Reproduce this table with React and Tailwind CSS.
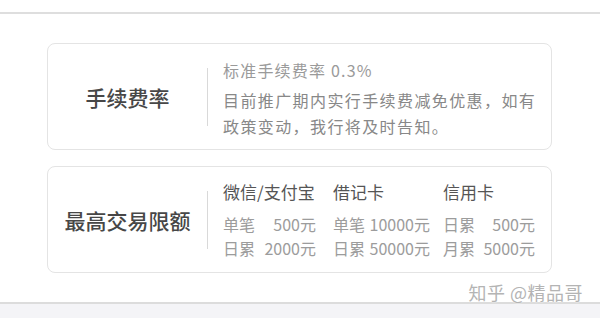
import React from 'react';

const limits = [
  { name: '微信/支付宝', col: 'w-[110px]', inner: 'w-[93px]', rows: [['单笔', '500元'], ['日累', '2000元']] },
  { name: '借记卡', col: 'w-[110px]', inner: 'w-[97px]', rows: [['单笔', '10000元'], ['日累', '50000元']] },
  { name: '信用卡', col: 'w-[92px]', inner: 'w-[92px]', rows: [['日累', '500元'], ['月累', '5000元']] },
];

const Card = ({ title, titleClass, children }) => (
  <div className="h-[107px] shrink-0 flex items-center border border-[#e4e4e4] rounded-[8px] bg-white">
    <div className={`w-[159px] shrink-0 flex justify-center text-[21px] font-medium text-[#474747] ${titleClass}`}>
      {title}
    </div>
    <div className="w-px h-[58px] bg-[#d9d9d9] shrink-0" />
    <div className="flex-1 self-stretch pl-[15px]">{children}</div>
  </div>
);

const App = () => {
  return (
    <div className="relative w-[600px] h-[318px] bg-white flex flex-col font-['Noto_Sans_CJK_SC','Noto_Sans',sans-serif]">
      <div className="h-[14px] shrink-0 border-b-2 border-[#dedede]" />

      <div className="flex-1 flex flex-col gap-[16px] pt-[29px] pl-[47px] pr-[48px]">
        <Card title="手续费率" titleClass="pt-[2px]">
          <div className="pt-[15px] text-[#9a9a9a] text-[16px] leading-[22px] tracking-[1.2px]">标准手续费率 0.3%</div>
          <div className="pt-[6px] text-[#888] text-[16px] leading-[26px] tracking-[1.4px]">
            <div>目前推广期内实行手续费减免优惠，如有</div>
            <div>政策变动，我行将及时告知。</div>
          </div>
        </Card>

        <Card title="最高交易限额" titleClass="pt-[2px]">
          <div className="flex pt-[14px]">
            {limits.map((item) => (
              <div key={item.name} className={`${item.col} shrink-0`}>
                <div className="text-[17px] leading-[22px] text-[#555]">{item.name}</div>
                <div className="pt-[9px] flex flex-col text-[16px] leading-[24px] text-[#9c9c9c]">
                  {item.rows.map(([label, value]) => (
                    <div key={label} className={`${item.inner} flex justify-between`}>
                      <span>{label}</span>
                      <span>{value}</span>
                    </div>
                  ))}
                </div>
              </div>
            ))}
          </div>
        </Card>
      </div>

      <div className="h-[16px] shrink-0 border-t-2 border-[#dcdcdc] bg-[#f4f4f7]" />

      {/* watermark */}
      <div className="absolute right-[17px] top-[281px] text-[18px] leading-[22px] tracking-[0.5px] text-[#b4b4b4] [text-shadow:0_0_2px_#fff]">
        知乎 @精品哥
      </div>
    </div>
  );
};

export default App;
